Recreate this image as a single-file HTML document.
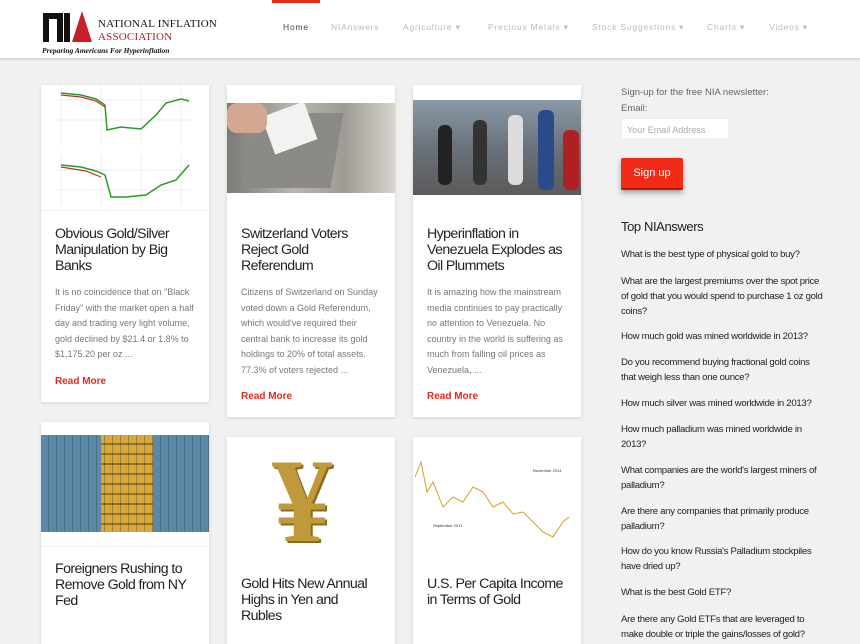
<!DOCTYPE html>
<html><head><meta charset="utf-8"><style>
*{margin:0;padding:0;box-sizing:border-box}
html,body{width:860px;height:644px;overflow:hidden}
body{background:#f1f1f1;font-family:"Liberation Sans",sans-serif;position:relative}
.hdr{position:absolute;left:0;top:0;width:860px;height:58px;background:#fff;box-shadow:0 1px 3px rgba(0,0,0,.2)}
.nav{position:absolute;top:22px;font-size:8.5px;color:#bbb;letter-spacing:.8px}
.card{position:absolute;width:168px;background:#fff;box-shadow:0 1px 4px rgba(0,0,0,.12)}
.card .img{position:absolute;left:0;width:168px;overflow:hidden}
.t{position:absolute;left:14px;font-size:14.2px;line-height:16px;color:#222;letter-spacing:-.6px;white-space:nowrap}
.p{position:absolute;left:14px;font-size:9px;line-height:15.6px;color:#777;white-space:nowrap}
.rm{position:absolute;left:14px;font-size:10px;font-weight:bold;color:#e8281a}
.q{position:absolute;left:621px;font-size:9.6px;line-height:15px;color:#222;letter-spacing:-.3px;white-space:nowrap}
</style></head><body>
<div class="hdr">
 <div style="position:absolute;left:43px;top:13px;width:20px;height:29px;background:#111"></div>
 <div style="position:absolute;left:49px;top:19px;width:8px;height:23px;background:#fff"></div>
 <div style="position:absolute;left:64px;top:13px;width:6px;height:29px;background:#111"></div>
 <div style="position:absolute;left:72px;top:11px;width:0;height:0;border-left:10px solid transparent;border-right:10px solid transparent;border-bottom:31px solid #c8202a"></div>
 <div style="position:absolute;left:98px;top:18px;font-family:'Liberation Serif',serif;font-size:11px;color:#111;letter-spacing:.2px">NATIONAL INFLATION</div>
 <div style="position:absolute;left:98px;top:31px;font-family:'Liberation Serif',serif;font-size:11px;color:#b01e28;letter-spacing:.2px">ASSOCIATION</div>
 <div style="position:absolute;left:42px;top:46px;font-family:'Liberation Serif',serif;font-size:7.5px;font-style:italic;font-weight:bold;color:#111">Preparing Americans For Hyperinflation</div>
 <div style="position:absolute;left:272px;top:0;width:48px;height:3px;background:#e8281a"></div>
 <div class="nav" style="left:283px;color:#444">Home</div>
 <div class="nav" style="left:331px">NIAnswers</div>
 <div class="nav" style="left:403px">Agriculture ▾</div>
 <div class="nav" style="left:488px">Precious Metals ▾</div>
 <div class="nav" style="left:592px">Stock Suggestions ▾</div>
 <div class="nav" style="left:707px">Charts ▾</div>
 <div class="nav" style="left:769px">Videos ▾</div>
</div>

<div class="card" style="left:41px;top:85px;height:317px">
 <div class="img" style="top:0;height:126px;background:#fff;border-bottom:1px solid #eee">
  <svg width="168" height="126"><g stroke="#ddd" stroke-width=".5"><line x1="20" y1="0" x2="20" y2="60"/><line x1="60" y1="0" x2="60" y2="60"/><line x1="100" y1="0" x2="100" y2="60"/><line x1="140" y1="0" x2="140" y2="60"/><line x1="20" y1="70" x2="20" y2="120"/><line x1="60" y1="70" x2="60" y2="120"/><line x1="100" y1="70" x2="100" y2="120"/><line x1="140" y1="70" x2="140" y2="120"/><line x1="15" y1="15" x2="150" y2="15"/><line x1="15" y1="35" x2="150" y2="35"/><line x1="15" y1="85" x2="150" y2="85"/><line x1="15" y1="105" x2="150" y2="105"/></g>
  <polyline fill="none" stroke="#2a9a2a" stroke-width="1.5" points="20,8 40,10 55,14 64,20 66,45 80,42 100,44 115,30 125,18 140,14 148,16"/>
  <polyline fill="none" stroke="#c03030" stroke-width="1.2" points="20,10 40,12 55,16 64,22"/>
  <polyline fill="none" stroke="#2a9a2a" stroke-width="1.5" points="20,80 40,82 55,86 64,90 70,112 85,112 105,110 120,100 135,95 148,80"/>
  <polyline fill="none" stroke="#c03030" stroke-width="1.2" points="20,82 45,86 60,92"/></svg>
 </div>
 <div class="t" style="top:141px">Obvious Gold/Silver<br>Manipulation by Big<br>Banks</div>
 <div class="p" style="top:200px">It is no coincidence that on "Black<br>Friday" with the market open a half<br>day and trading very light volume,<br>gold declined by $21.4 or 1.8% to<br>$1,175.20 per oz ...</div>
 <div class="rm" style="top:291px">Read More</div>
</div>

<div class="card" style="left:227px;top:85px;height:332px">
 <div class="img" style="top:18px;height:90px;background:linear-gradient(90deg,#7c7a76,#b9b6b0 40%,#9e9b95 70%,#d8d5cf)">
  <div style="position:absolute;left:20px;top:10px;width:90px;height:75px;background:#8c8a86;transform:skewX(-10deg)"></div>
  <div style="position:absolute;left:40px;top:5px;width:45px;height:40px;background:#f2f2f0;transform:rotate(-20deg)"></div>
  <div style="position:absolute;left:0;top:0;width:40px;height:30px;background:#d4a890;border-radius:10px"></div>
 </div>
 <div class="t" style="top:141px">Switzerland Voters<br>Reject Gold<br>Referendum</div>
 <div class="p" style="top:200px">Citizens of Switzerland on Sunday<br>voted down a Gold Referendum,<br>which would've required their<br>central bank to increase its gold<br>holdings to 20% of total assets.<br>77.3% of voters rejected ...</div>
 <div class="rm" style="top:306px">Read More</div>
</div>

<div class="card" style="left:413px;top:85px;height:332px">
 <div class="img" style="top:15px;height:95px;background:linear-gradient(180deg,#8a9aa8,#6a727a 50%,#5a5a5a)">
  <div style="position:absolute;left:25px;top:25px;width:14px;height:60px;background:#222;border-radius:6px"></div>
  <div style="position:absolute;left:60px;top:20px;width:14px;height:65px;background:#333;border-radius:6px"></div>
  <div style="position:absolute;left:95px;top:15px;width:15px;height:70px;background:#ddd;border-radius:6px"></div>
  <div style="position:absolute;left:125px;top:10px;width:16px;height:80px;background:#2a4a8a;border-radius:6px"></div>
  <div style="position:absolute;left:150px;top:30px;width:16px;height:60px;background:#b02020;border-radius:6px"></div>
 </div>
 <div class="t" style="top:141px">Hyperinflation in<br>Venezuela Explodes as<br>Oil Plummets</div>
 <div class="p" style="top:200px">It is amazing how the mainstream<br>media continues to pay practically<br>no attention to Venezuela. No<br>country in the world is suffering as<br>much from falling oil prices as<br>Venezuela, ...</div>
 <div class="rm" style="top:306px">Read More</div>
</div>

<div class="card" style="left:41px;top:422px;height:240px">
 <div class="img" style="top:13px;height:97px;background:#5a8aa8">
  <div style="position:absolute;left:60px;top:0;width:52px;height:97px;background:repeating-linear-gradient(180deg,#d8a838 0 8px,#9a7020 8px 10px)"></div>
  <div style="position:absolute;left:0;top:0;width:168px;height:97px;background:repeating-linear-gradient(90deg,transparent 0 7px,rgba(40,60,70,.35) 7px 8px)"></div>
 </div>
 <div style="position:absolute;left:0;top:124px;width:168px;height:1px;background:#eee"></div>
 <div class="t" style="top:139px">Foreigners Rushing to<br>Remove Gold from NY<br>Fed</div>
</div>

<div class="card" style="left:227px;top:437px;height:230px">
 <div class="img" style="top:0;height:126px;background:#fff">
  <div style="position:absolute;left:45px;top:4px;font-family:'Liberation Serif',serif;font-size:120px;line-height:120px;color:#c09a3a;font-weight:bold;text-shadow:2px 2px 0 #8a6a20">¥</div>
 </div>
 <div class="t" style="top:139px">Gold Hits New Annual<br>Highs in Yen and<br>Rubles</div>
</div>

<div class="card" style="left:413px;top:437px;height:230px">
 <div class="img" style="top:15px;height:93px;background:#fff">
  <svg width="168" height="93"><polyline fill="none" stroke="#d8a020" stroke-width="1" points="2,25 8,10 14,40 20,30 30,55 40,45 50,50 60,35 70,40 80,55 90,50 100,62 110,60 120,70 130,80 140,85 150,70 156,65"/><text x="120" y="20" font-size="4" fill="#333" font-family="Liberation Sans">November 2014</text><text x="20" y="75" font-size="4" fill="#333" font-family="Liberation Sans">September 2011</text></svg>
 </div>
 <div class="t" style="top:139px">U.S. Per Capita Income<br>in Terms of Gold</div>
</div>

<div style="position:absolute;left:621px;top:87px;font-size:9.5px;color:#666">Sign-up for the free NIA newsletter:</div>
<div style="position:absolute;left:621px;top:103px;font-size:9.5px;color:#666">Email:</div>
<div style="position:absolute;left:621px;top:118px;width:108px;height:21px;background:#fff;border:1px solid #eee;font-size:9px;color:#aaa;padding:6px 5px">Your Email Address</div>
<div style="position:absolute;left:621px;top:158px;width:62px;height:32px;background:#f02a14;border-bottom:2px solid #b01a0a;border-radius:2px;box-shadow:0 3px 6px rgba(0,0,0,.35);color:#fff;font-size:11px;text-align:center;line-height:30px">Sign up</div>
<div style="position:absolute;left:621px;top:219px;font-size:13px;color:#222;letter-spacing:-.4px">Top NIAnswers</div>
<div class="q" style="top:247px">What is the best type of physical gold to buy?</div>
<div class="q" style="top:274px">What are the largest premiums over the spot price<br>of gold that you would spend to purchase 1 oz gold<br>coins?</div>
<div class="q" style="top:329px">How much gold was mined worldwide in 2013?</div>
<div class="q" style="top:355px">Do you recommend buying fractional gold coins<br>that weigh less than one ounce?</div>
<div class="q" style="top:396px">How much silver was mined worldwide in 2013?</div>
<div class="q" style="top:422px">How much palladium was mined worldwide in<br>2013?</div>
<div class="q" style="top:463px">What companies are the world's largest miners of<br>palladium?</div>
<div class="q" style="top:504px">Are there any companies that primarily produce<br>palladium?</div>
<div class="q" style="top:544px">How do you know Russia's Palladium stockpiles<br>have dried up?</div>
<div class="q" style="top:585px">What is the best Gold ETF?</div>
<div class="q" style="top:612px">Are there any Gold ETFs that are leveraged to<br>make double or triple the gains/losses of gold?</div>
</body></html>
